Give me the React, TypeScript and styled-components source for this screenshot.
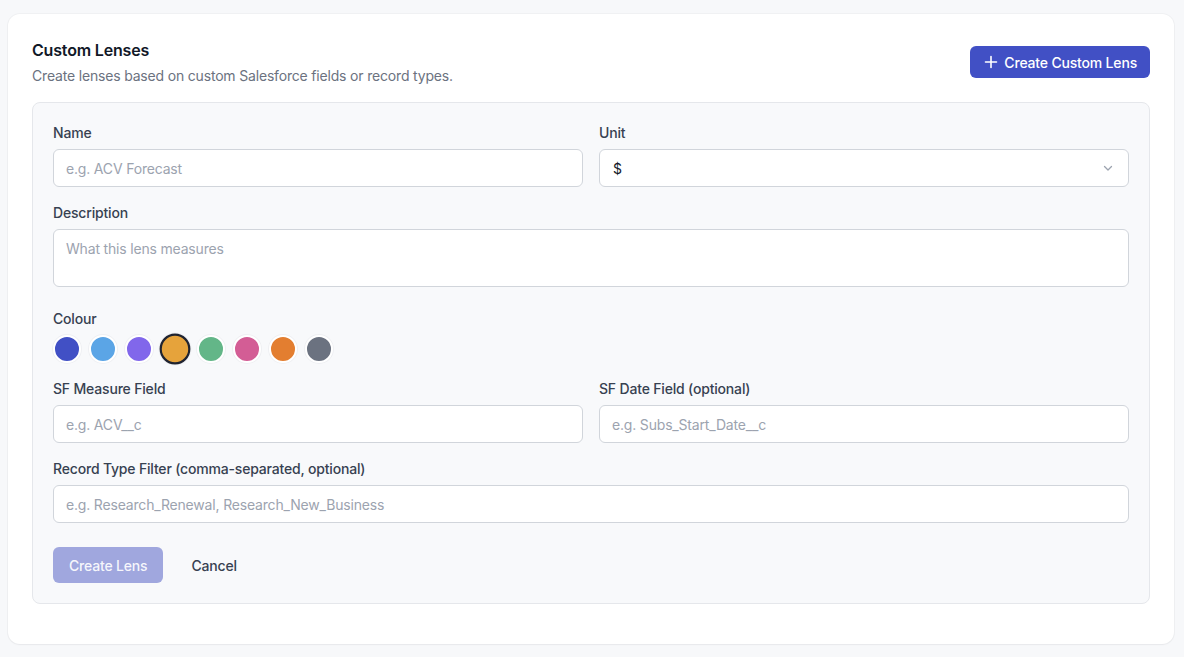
import React from "react";
import styled, { createGlobalStyle } from "styled-components";

const Global = createGlobalStyle`
  * { box-sizing: border-box; }
  html, body { margin: 0; padding: 0; background: #f7f8fa; }
  body { font-family: Inter, "Noto Sans", sans-serif; color: #111827; letter-spacing: -0.18px; -webkit-font-smoothing: antialiased; }
  input, textarea, button { letter-spacing: -0.18px; }
`;

const Page = styled.div`
  padding: 14px 10px 13px 8px;
`;

const Card = styled.section`
  background: #ffffff;
  border-radius: 12px;
  box-shadow: 0 0 0 1px rgba(17, 24, 39, 0.03), 0 1px 2px rgba(17, 24, 39, 0.04);
  padding: 24px 24px 40px 24px;
`;

const Header = styled.div`
  display: flex;
  align-items: center;
  justify-content: space-between;
  margin-bottom: 16px;
`;

const TitleBlock = styled.div`
  display: flex;
  flex-direction: column;
  gap: 4px;
`;

const Title = styled.h2`
  margin: 0;
  font-size: 16px;
  line-height: 24px;
  font-weight: 600;
  color: #111827;
`;

const Subtitle = styled.p`
  margin: 0;
  font-size: 14px;
  line-height: 20px;
  color: #6b7280;
`;

const PrimaryButton = styled.button`
  display: inline-flex;
  align-items: center;
  gap: 6px;
  height: 32px;
  padding: 0 13px 0 14px;
  border: none;
  border-radius: 6px;
  background: #4150c5;
  color: #ffffff;
  font-family: inherit;
  font-size: 14px;
  font-weight: 500;
  cursor: pointer;
`;

const Panel = styled.div`
  background: #f8f9fb;
  border: 1px solid #e5e7eb;
  border-radius: 8px;
  padding: 20px 20px 20px 20px;
  display: flex;
  flex-direction: column;
  gap: 16px;
`;

const Row = styled.div`
  display: grid;
  grid-template-columns: 1fr 1fr;
  gap: 16px;
`;

const Field = styled.div`
  display: flex;
  flex-direction: column;
  gap: 6px;
`;

const Label = styled.label`
  font-size: 14px;
  line-height: 20px;
  font-weight: 500;
  color: #374151;
`;

const Input = styled.input`
  height: 38px;
  width: 100%;
  padding: 0 12px;
  border: 1px solid #d1d5db;
  border-radius: 6px;
  background: #ffffff;
  font-family: inherit;
  font-size: 14px;
  color: #111827;
  outline: none;
  &::placeholder { color: #9ca3af; }
`;

const TextArea = styled.textarea`
  display: block;
  height: 58px;
  width: 100%;
  padding: 9px 12px;
  border: 1px solid #d1d5db;
  border-radius: 6px;
  background: #ffffff;
  font-family: inherit;
  font-size: 14px;
  line-height: 20px;
  color: #111827;
  resize: none;
  outline: none;
  margin-bottom: 6px;
  &::placeholder { color: #9ca3af; }
`;

const SelectBox = styled.div`
  position: relative;
  height: 38px;
  display: flex;
  align-items: center;
  justify-content: space-between;
  padding: 0 14px 0 13px;
  border: 1px solid #d1d5db;
  border-radius: 6px;
  background: #ffffff;
  font-size: 14px;
  color: #111827;
`;

const Swatches = styled.div`
  display: flex;
  align-items: center;
  gap: 8px;
  height: 28px;
`;

const Swatch = styled.button<{ $color: string; $selected?: boolean }>`
  width: 28px;
  height: 28px;
  padding: 0;
  border-radius: 50%;
  background: ${(p) => p.$color};
  border: 2px solid ${(p) => (p.$selected ? "#1f2330" : "#ffffff")};
  transform: ${(p) => (p.$selected ? "scale(1.1)" : "none")};
  box-shadow: 0 0 0 1px rgba(17, 24, 39, 0.04);
  cursor: pointer;
`;

const Actions = styled.div`
  display: flex;
  align-items: center;
  gap: 12px;
  margin-top: 8px;
`;

const SubmitButton = styled.button`
  height: 36px;
  padding: 0 16px;
  border: none;
  border-radius: 6px;
  background: #a0a7de;
  color: rgba(255, 255, 255, 0.92);
  font-family: inherit;
  font-size: 14px;
  font-weight: 500;
`;

const GhostButton = styled.button`
  height: 36px;
  padding: 0 16px;
  border: none;
  background: transparent;
  color: #374151;
  font-family: inherit;
  font-size: 14px;
  font-weight: 500;
  cursor: pointer;
`;

const colours = ["#4150c5", "#5ba5e6", "#8167eb", "#e6a33b", "#63b688", "#d35d95", "#e37e30", "#6b7280"];

export default function App() {
  return (
    <>
      <Global />
      <Page>
        <Card>
          <Header>
            <TitleBlock>
              <Title>Custom Lenses</Title>
              <Subtitle>Create lenses based on custom Salesforce fields or record types.</Subtitle>
            </TitleBlock>
            <PrimaryButton>
              <svg width="14" height="14" viewBox="0 0 14 14" fill="none" stroke="currentColor" strokeWidth="1.6" strokeLinecap="round">
                <path d="M7 1.5v11M1.5 7h11" />
              </svg>
              Create Custom Lens
            </PrimaryButton>
          </Header>
          <Panel>
            <Row>
              <Field>
                <Label>Name</Label>
                <Input placeholder="e.g. ACV Forecast" />
              </Field>
              <Field>
                <Label>Unit</Label>
                <SelectBox>
                  <span>$</span>
                  <svg width="12" height="12" viewBox="0 0 12 12" fill="none" stroke="#9ca3af" strokeWidth="1.3" strokeLinecap="round" strokeLinejoin="round">
                    <path d="M2.5 4.5L6 8l3.5-3.5" />
                  </svg>
                </SelectBox>
              </Field>
            </Row>
            <Field>
              <Label>Description</Label>
              <TextArea placeholder="What this lens measures" />
            </Field>
            <Field>
              <Label>Colour</Label>
              <Swatches>
                {colours.map((c, i) => (
                  <Swatch key={c} $color={c} $selected={i === 3} aria-label={c} />
                ))}
              </Swatches>
            </Field>
            <Row>
              <Field>
                <Label>SF Measure Field</Label>
                <Input placeholder="e.g. ACV__c" />
              </Field>
              <Field>
                <Label>SF Date Field (optional)</Label>
                <Input placeholder="e.g. Subs_Start_Date__c" />
              </Field>
            </Row>
            <Field>
              <Label>Record Type Filter (comma-separated, optional)</Label>
              <Input placeholder="e.g. Research_Renewal, Research_New_Business" />
            </Field>
            <Actions>
              <SubmitButton disabled>Create Lens</SubmitButton>
              <GhostButton>Cancel</GhostButton>
            </Actions>
          </Panel>
        </Card>
      </Page>
    </>
  );
}
